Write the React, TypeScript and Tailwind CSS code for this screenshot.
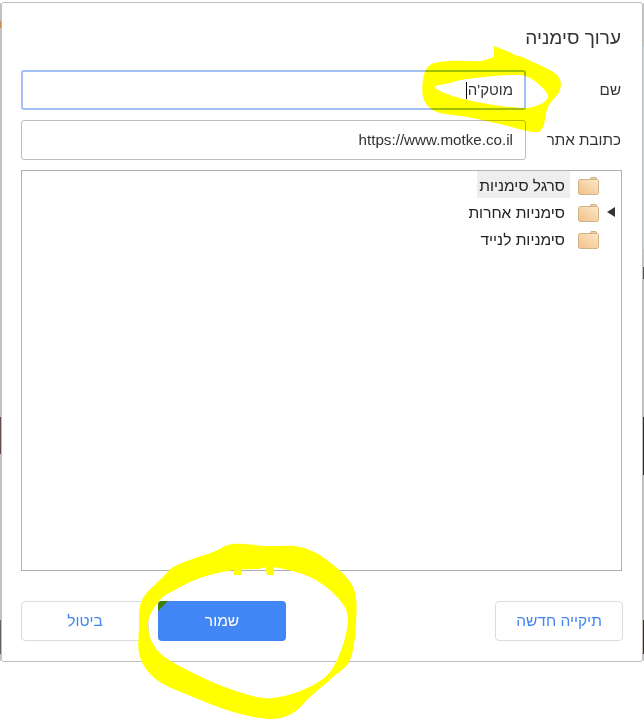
import React from 'react';

const font = { fontFamily: '"Liberation Sans", "Noto Sans", sans-serif' };

// smooth closed outline through hand-picked points
function blob(pts: number[][]) {
  const n = pts.length;
  let d = `M${pts[0][0]} ${pts[0][1]}`;
  for (let i = 0; i < n; i++) {
    const p0 = pts[(i - 1 + n) % n];
    const p1 = pts[i];
    const p2 = pts[(i + 1) % n];
    const p3 = pts[(i + 2) % n];
    const c1x = p1[0] + (p2[0] - p0[0]) / 6;
    const c1y = p1[1] + (p2[1] - p0[1]) / 6;
    const c2x = p2[0] - (p3[0] - p1[0]) / 6;
    const c2y = p2[1] - (p3[1] - p1[1]) / 6;
    d += ` C${c1x} ${c1y} ${c2x} ${c2y} ${p2[0]} ${p2[1]}`;
  }
  return d + ' Z';
}

const topOuter = [[498, 56], [515, 55], [533, 62], [557, 75], [560, 90], [548, 107], [543, 127], [533, 132], [500, 124], [467, 117], [437, 112], [424, 100], [423, 80], [430, 65], [450, 61], [480, 61]];
const topInner = [[435, 87], [450, 83], [467, 79], [510, 75], [530, 78], [548, 96], [533, 107], [510, 107], [477, 102], [450, 95]];
const bottomOuter = [[233, 544], [267, 546], [300, 547], [327, 560], [353, 587], [356, 623], [350, 660], [333, 677], [310, 697], [293, 713], [270, 719], [233, 712], [193, 697], [157, 680], [140, 657], [139, 627], [142, 600], [163, 577], [177, 565], [213, 552]];
const bottomInner = [[273, 567], [310, 577], [337, 597], [348, 620], [337, 660], [317, 683], [273, 698], [233, 690], [187, 670], [157, 650], [148, 623], [160, 600], [175, 590], [200, 578], [233, 570], [257, 569]];

const slivers = [
  { side: 'left', top: 21, h: 7, color: '#c98a4a' },
  { side: 'left', top: 417, h: 37, color: '#6b4a4a' },
  { side: 'left', top: 620, h: 34, color: '#5f6660' },
  { side: 'right', top: 46, h: 203, color: '#c5d3d6' },
  { side: 'right', top: 267, h: 12, color: '#555555' },
  { side: 'right', top: 417, h: 58, color: '#2b2b2b' },
  { side: 'right', top: 620, h: 34, color: '#333028' },
];

function Folder() {
  return (
    <svg width="21" height="18" viewBox="0 0 21 18" className="mt-[2px] shrink-0">
      <defs>
        <linearGradient id="folderFill" x1="1" y1="0" x2="0" y2="1">
          <stop offset="0" stopColor="#fbe8c8" />
          <stop offset="1" stopColor="#f2c088" />
        </linearGradient>
      </defs>
      <path d="M12 2.5 L13 0.5 H18 L19 2.5 Z" fill="#e9cfa4" stroke="#d2b288" />
      <path d="M0.5 3.5 L1.5 2.5 H19.5 L20.5 3.5 V16.5 L19.5 17.5 H1.5 L0.5 16.5 Z" fill="url(#folderFill)" stroke="#d2b288" />
    </svg>
  );
}

function FolderRow({ label, selected, expandable }: { label: string; selected?: boolean; expandable?: boolean }) {
  return (
    <div className="flex h-[27px] items-center">
      <div className="flex w-[22px] shrink-0 justify-start pr-[6px]">
        {expandable && <div className="h-0 w-0 border-y-[5px] border-r-[8px] border-y-transparent border-r-[#333]" />}
      </div>
      <Folder />
      <div className={`mr-2 flex h-[27px] items-center pl-[2px] pr-[5px] pt-[3px] text-[15.5px] text-[#222] ${selected ? 'bg-[#eeeeee]' : ''}`}>{label}</div>
    </div>
  );
}

function Scribbles() {
  return (
    <svg width="644" height="719" viewBox="0 0 644 719" className="pointer-events-none absolute left-0 top-0">
      <path className="mix-blend-multiply" fill="#ffff00" fillRule="evenodd" d={blob(topOuter) + ' ' + blob(topInner)} />
      <path fill="#ffff00" d="M494 46 L512 53 L520 62 H494 Z" />
      <path fill="#ffff00" fillRule="evenodd" d={blob(bottomOuter) + ' ' + blob(bottomInner)} />
      <path fill="#ffff00" d="M234 566 H242 L241 575 H234 Z M265 566 H274 V575 H267 Z" />
      <path d="M158 611 V605 Q158 601 162 601 H168 Z" fill="#3f7f00" />
    </svg>
  );
}

export default function App() {
  return (
    <div className="relative h-[719px] w-[644px] overflow-hidden bg-white" style={font}>
      <div className="absolute left-0 top-[3px] h-[658px] w-px bg-[#c4c4c4]" />
      <div className="absolute right-0 top-[3px] h-[658px] w-px bg-[#c4c4c4]" />
      {slivers.map((s) => (
        <div
          key={s.side + s.top}
          className="absolute w-px"
          style={{ [s.side]: 0, top: s.top, height: s.h, backgroundColor: s.color }}
        />
      ))}
      <div dir="rtl" className="ml-px mt-[2px] flex h-[660px] w-[642px] flex-col rounded-[3px] border border-[#bdbdbd] bg-white pl-[19px] pr-5">
        <h1 className="mt-[22px] h-[25px] pr-px text-[19px] leading-[25px] text-[#333]">ערוך סימניה</h1>
        <div className="mt-[20px] flex h-10 items-center">
          <label className="w-[96px] shrink-0 pr-px text-[15.2px] text-[#333]">שם</label>
          <div className="flex h-10 flex-1 items-center rounded-[3px] border-2 border-[#a1c1f4] px-[11px] text-[15px] text-[#333]">
            מוטק'ה
            <span className="mr-px h-[17px] w-px bg-black" />
          </div>
        </div>
        <div className="mt-[10px] flex h-10 items-center">
          <label className="w-[96px] shrink-0 pr-px text-[15.2px] text-[#333]">כתובת אתר</label>
          <div className="flex h-10 flex-1 items-center rounded-[3px] border border-[#bdbdbd] px-3 text-[15.2px] text-[#333]">
            https://www.motke.co.il
          </div>
        </div>
        <div className="mt-[10px] h-[401px] border border-[#b0b0b0]">
          <FolderRow label="סרגל סימניות" selected />
          <FolderRow label="סימניות אחרות" expandable />
          <FolderRow label="סימניות לנייד" />
        </div>
        <div className="mt-[30px] flex items-center justify-between">
          <button className="-mr-px h-10 w-32 rounded-[4px] border border-[#dadce0] text-[15.5px] font-medium text-[#4285f4]">תיקייה חדשה</button>
          <div className="flex gap-[9px]">
            <button className="h-10 w-32 rounded-[4px] bg-[#4285f4] text-[15.5px] font-medium text-white">שמור</button>
            <button className="h-10 w-32 rounded-[4px] border border-[#dadce0] text-[15.5px] font-medium text-[#4285f4]">ביטול</button>
          </div>
        </div>
      </div>
      <Scribbles />
    </div>
  );
}
